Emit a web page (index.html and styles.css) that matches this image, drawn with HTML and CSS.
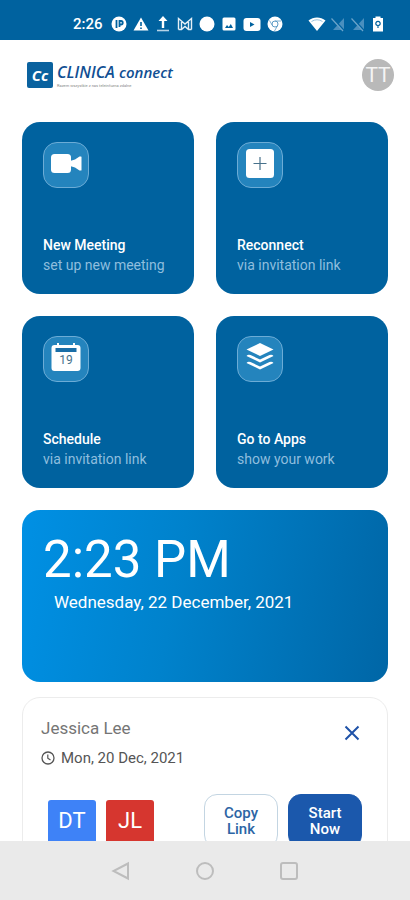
FILE: index.html
```html
<!DOCTYPE html>
<html lang="en">
<head>
	<meta charset="UTF-8">
	<meta name="viewport" content="width=device-width, initial-scale=1">
	<title>Clinica Connect</title>
	<link rel="stylesheet" href="styles.css">
</head>
<body>
	<div class="app">
		<div class="status-bar">
			<span class="time">2:26</span>
			<div class="notices">
				<svg viewBox="0 0 16 16"><circle cx="8" cy="8" r="7.5" fill="#fff"/><path d="M5.500 4v8M8.500 11V5h1.500a1.500 1.500 0 0 1 0 3.500H8.500" fill="none" stroke="#00629f" stroke-width="1.800"/></svg>
				<svg viewBox="0 0 16 16"><path d="M8 1.500 15.500 14.500H.5z" fill="#fff"/><path d="M8 6v4M8 11.500v1.500" stroke="#00629f" stroke-width="1.600"/></svg>
				<svg viewBox="0 0 16 16"><path d="M8 0 12.500 5H9.200v7H6.800V5H3.500z" fill="#fff"/><path d="M2 14.500h12" stroke="#b5d3e7" stroke-width="1.600"/></svg>
				<svg viewBox="0 0 16 16"><path d="M1.500 13.500v-11L8 8l6.500-5.500v11M4.500 13.500V6M11.500 13.500V6M1.500 13.500h3L8 10.500l3.500 3h3" fill="none" stroke="#e4eff6" stroke-width="1.400"/></svg>
				<svg viewBox="0 0 16 16"><circle cx="8" cy="8" r="7.500" fill="#fff"/></svg>
				<svg viewBox="0 0 16 16"><rect x="1.500" y="1.500" width="13" height="13" rx="1.500" fill="#fff"/><path d="M4 12l2-3 1.800 2 2-3 2.200 4z" fill="#00629f"/></svg>
				<svg class="wide" viewBox="0 0 18 16"><rect x=".5" y="2" width="17" height="13" rx="3" fill="#fff"/><path d="M7 6v5l4.500-2.500z" fill="#00629f"/></svg>
				<svg viewBox="0 0 16 16"><circle cx="8" cy="8" r="7.500" fill="#fff"/><circle cx="8" cy="8" r="3" fill="none" stroke="#5d9cc6"/><path d="M8 5h6M5.400 9.500 2.500 4.500M10.600 9.500 7.500 15" stroke="#5d9cc6" stroke-width=".8"/></svg>
			</div>
			<div class="signals">
				<svg class="wide" viewBox="0 0 18 16"><path d="M.5 4.500C5.500.5 12.500.5 17.500 4.500L9 15z" fill="#fff"/><path d="M3.500 5.500q5.500-3.500 11 0" fill="none" stroke="#7fb2d4" stroke-width=".8"/></svg>
				<svg viewBox="0 0 16 16"><path d="M14 2v12H3z" fill="#4a8fbe"/><path d="M2 2l12 13" stroke="#00629f" stroke-width="2.500"/><path d="M1.500 2.500 13 15" stroke="#6ba5cb" stroke-width="1.200"/></svg>
				<svg viewBox="0 0 16 16"><path d="M14 2v12H3z" fill="#4a8fbe"/><path d="M2 2l12 13" stroke="#00629f" stroke-width="2.500"/><path d="M1.500 2.500 13 15" stroke="#6ba5cb" stroke-width="1.200"/></svg>
				<svg viewBox="0 0 16 16"><path d="M5.500.5h5V2h2.500v13.500H3V2h2.500z" fill="#fff"/><path d="M8 12V9.500M6 8.500a2.200 2.200 0 1 1 4 0L8 10z" fill="none" stroke="#00629f" stroke-width="1.200"/></svg>
			</div>
		</div>
		<header class="header">
			<div class="brand">
				<span class="mark">Cc</span>
				<div class="brand-text">
					<div class="name">CLINICA <span class="small">connect</span></div>
					<div class="tagline">Razem wszystkie z nas teleinfuzna zdalne</div>
				</div>
			</div>
			<button class="avatar" type="button">TT</button>
		</header>
		<main class="content">
			<div class="tiles">
				<button class="tile" type="button">
					<span class="tile-icon">
						<svg viewBox="0 0 32 32"><rect x="1" y="6" width="20" height="19" rx="3.500" fill="#fff"/><path d="M20 13 25 11.500 29.500 8.500h1.500q.5 0 .5.5v13q0 .5-.5.5h-1.500L25 19.500 20 18z" fill="#fff"/></svg>
					</span>
					<span class="tile-title">New Meeting</span>
					<span class="tile-sub">set up new meeting</span>
				</button>
				<button class="tile" type="button">
					<span class="tile-icon">
						<svg viewBox="0 0 32 32"><rect x="2" y="1" width="28" height="29" rx="3.500" fill="#fff"/><path d="M16 9v13M9.500 15.500h13" stroke="#47718b" stroke-width="1.200"/></svg>
					</span>
					<span class="tile-title">Reconnect</span>
					<span class="tile-sub">via invitation link</span>
				</button>
				<button class="tile" type="button">
					<span class="tile-icon">
						<svg viewBox="0 0 32 32"><path d="M4.500 3H7V1h2v2h14V1h2v2h2.500q3 0 3 3v20q0 3-3 3h-23q-3 0-3-3V6q0-3 3-3z" fill="#fff"/><path d="M5.500 6h21v4h-21z" fill="#1a6ea7"/><text class="day" x="16" y="22" text-anchor="middle">19</text></svg>
					</span>
					<span class="tile-title">Schedule</span>
					<span class="tile-sub">via invitation link</span>
				</button>
				<button class="tile" type="button">
					<span class="tile-icon">
						<svg viewBox="0 0 32 32"><g fill="#fff"><path d="M16 1 29.500 7.500 16 14 2.500 7.500z"/><path d="M2.500 14q1.500-2 4-1l9.500 4.500 9.500-4.500q2.500-1 4 1L16 20.500z"/><path d="M2.500 21q1.500-2 4-1l9.500 4.500 9.500-4.500q2.500-1 4 1L16 27.500z"/></g></svg>
					</span>
					<span class="tile-title">Go to Apps</span>
					<span class="tile-sub">show your work</span>
				</button>
			</div>
			<section class="clock">
				<div class="clock-time">2:23 PM</div>
				<div class="clock-date">Wednesday, 22 December, 2021</div>
			</section>
			<section class="meeting">
				<div class="meeting-head">
					<div>
						<h2 class="host">Jessica Lee</h2>
						<div class="date">
							<svg viewBox="0 0 14 14"><circle cx="7" cy="7" r="6" fill="none" stroke="#555" stroke-width="1.300"/><path d="M6.800 3.500V7.200l2.700 1.800" fill="none" stroke="#555" stroke-width="1.200"/></svg>
							<span>Mon, 20 Dec, 2021</span>
						</div>
					</div>
					<button class="close" type="button" aria-label="Close">
						<svg viewBox="0 0 16 16"><path d="M1.500 1.500l13 13M14.500 1.500l-13 13" stroke="#1f52a8" stroke-width="2"/></svg>
					</button>
				</div>
				<div class="meeting-foot">
					<div class="people">
						<span class="person blue">DT</span>
						<span class="person red">JL</span>
					</div>
					<div class="actions">
						<button class="btn copy" type="button">Copy Link</button>
						<button class="btn start" type="button">Start Now</button>
					</div>
				</div>
			</section>
		</main>
		<nav class="nav-bar">
			<button type="button" aria-label="Back"><svg viewBox="0 0 20 20"><path d="M17 2.500v15L2.500 10z"/></svg></button>
			<button type="button" aria-label="Home"><svg viewBox="0 0 20 20"><circle cx="10" cy="10" r="8"/></svg></button>
			<button type="button" aria-label="Recent"><svg viewBox="0 0 20 20"><rect x="2" y="2" width="16" height="16" rx="2"/></svg></button>
		</nav>
	</div>
</body>
</html>
```
FILE: styles.css
```css
*{
	margin: 0;
	padding: 0;
	box-sizing: border-box;
}
body{
	font-family: Roboto, "Liberation Sans", sans-serif;
	background-color: #fff;
}
button{
	border: none;
	background: none;
	font-family: inherit;
	cursor: pointer;
}
svg{
	display: block;
}
.app{
	display: flex;
	flex-direction: column;
	height: 100vh;
	overflow: hidden;
}

/* status bar */
.status-bar{
	flex: none;
	display: flex;
	align-items: center;
	height: 40px;
	padding: 8px 24px 0 73px;
	background-color: #00629f;
	color: #fff;
}
.status-bar .time{
	font-size: 15px;
	font-weight: 500;
}
.status-bar svg{
	width: 16px;
	height: 16px;
}
.status-bar svg.wide{
	width: 18px;
}
.notices{
	display: flex;
	gap: 6px;
	margin-left: 8px;
}
.signals{
	display: flex;
	gap: 4px;
	margin-left: auto;
}

/* header */
.header{
	flex: none;
	display: flex;
	align-items: center;
	justify-content: space-between;
	height: 70px;
	padding: 0 16px 0 27px;
}
.brand{
	display: flex;
	align-items: center;
	gap: 4px;
}
.mark{
	width: 26px;
	height: 26px;
	border-radius: 2px;
	background-color: #0a629f;
	color: #fff;
	font: italic bold 15px/26px "Open Sans", sans-serif;
	text-align: center;
}
.name{
	color: #114f93;
	font: italic 600 16px/22px "Open Sans", sans-serif;
	white-space: nowrap;
}
.name .small{
	font-size: 15px;
}
.tagline{
	color: #888;
	font-size: 4px;
	line-height: 6px;
}
.avatar{
	width: 32px;
	height: 32px;
	border-radius: 50%;
	background-color: #b9b9b9;
	color: #f4f4f4;
	font-size: 21px;
	line-height: 32px;
}

/* content */
.content{
	flex: 1;
	min-height: 0;
	padding: 12px 22px 0;
	overflow: hidden;
}
.tiles{
	display: grid;
	grid-template-columns: 1fr 1fr;
	gap: 22px;
}
.tile{
	display: flex;
	flex-direction: column;
	height: 172px;
	padding: 20px 21px 19px;
	border-radius: 18px;
	background-color: #00629f;
	text-align: left;
}
.tile-icon{
	display: flex;
	align-items: center;
	justify-content: center;
	width: 46px;
	height: 46px;
	margin-bottom: auto;
	padding-bottom: 3px;
	border: 1px solid #6cacd6;
	border-radius: 14px;
	background-color: #2484bd;
}
.tile-icon svg{
	width: 32px;
	height: 32px;
}
.day{
	fill: #47718b;
	font-size: 12px;
}
.tile-title{
	color: #fff;
	font-size: 14px;
	font-weight: 500;
	line-height: 20px;
}
.tile-sub{
	color: #8fbede;
	font-size: 14px;
	line-height: 20px;
}

/* clock */
.clock{
	height: 172px;
	margin-top: 22px;
	padding: 22px 21px;
	border-radius: 18px;
	background: linear-gradient(100deg, #0090e4, #0082cc 42%, #0066a6);
	color: #fff;
}
.clock-time{
	font-size: 51px;
	line-height: 56px;
}
.clock-date{
	padding-left: 11px;
	font-size: 17px;
	line-height: 28px;
}

/* meeting card */
.meeting{
	margin-top: 15px;
	padding: 18px;
	border: 1px solid #ececec;
	border-radius: 18px;
}
.meeting-head{
	display: flex;
	justify-content: space-between;
}
.host{
	color: #757575;
	font-size: 17px;
	font-weight: 400;
	line-height: 24px;
}
.date{
	display: flex;
	align-items: center;
	gap: 6px;
	margin-top: 6px;
	color: #555;
	font-size: 15px;
	line-height: 24px;
}
.date svg{
	width: 14px;
	height: 14px;
}
.close{
	align-self: flex-start;
	padding: 9px;
}
.close svg{
	width: 16px;
	height: 16px;
}
.meeting-foot{
	display: flex;
	align-items: flex-start;
	justify-content: space-between;
	margin-top: 24px;
	padding: 0 7px;
}
.people{
	display: flex;
	gap: 10px;
	padding-top: 6px;
}
.person{
	width: 48px;
	height: 48px;
	border-radius: 3px;
	color: #fff;
	font-size: 22px;
	line-height: 42px;
	text-align: center;
}
.person.blue{
	background-color: #3e82f7;
}
.person.red{
	background-color: #d6362f;
}
.actions{
	display: flex;
	gap: 10px;
}
.btn{
	width: 74px;
	padding: 10px 12px;
	border: 1px solid #c3d5e2;
	border-radius: 13px;
	color: #2c65a5;
	font-size: 15px;
	font-weight: 500;
	line-height: 16px;
}
.btn.start{
	border-color: #1b58ac;
	background-color: #1b58ac;
	color: #fff;
}

/* navigation bar */
.nav-bar{
	flex: none;
	display: flex;
	align-items: center;
	justify-content: center;
	gap: 64px;
	height: 59px;
	background-color: #eaeaea;
}
.nav-bar svg{
	width: 20px;
	height: 20px;
	fill: none;
	stroke: #bdbdbd;
	stroke-width: 2;
}
```
